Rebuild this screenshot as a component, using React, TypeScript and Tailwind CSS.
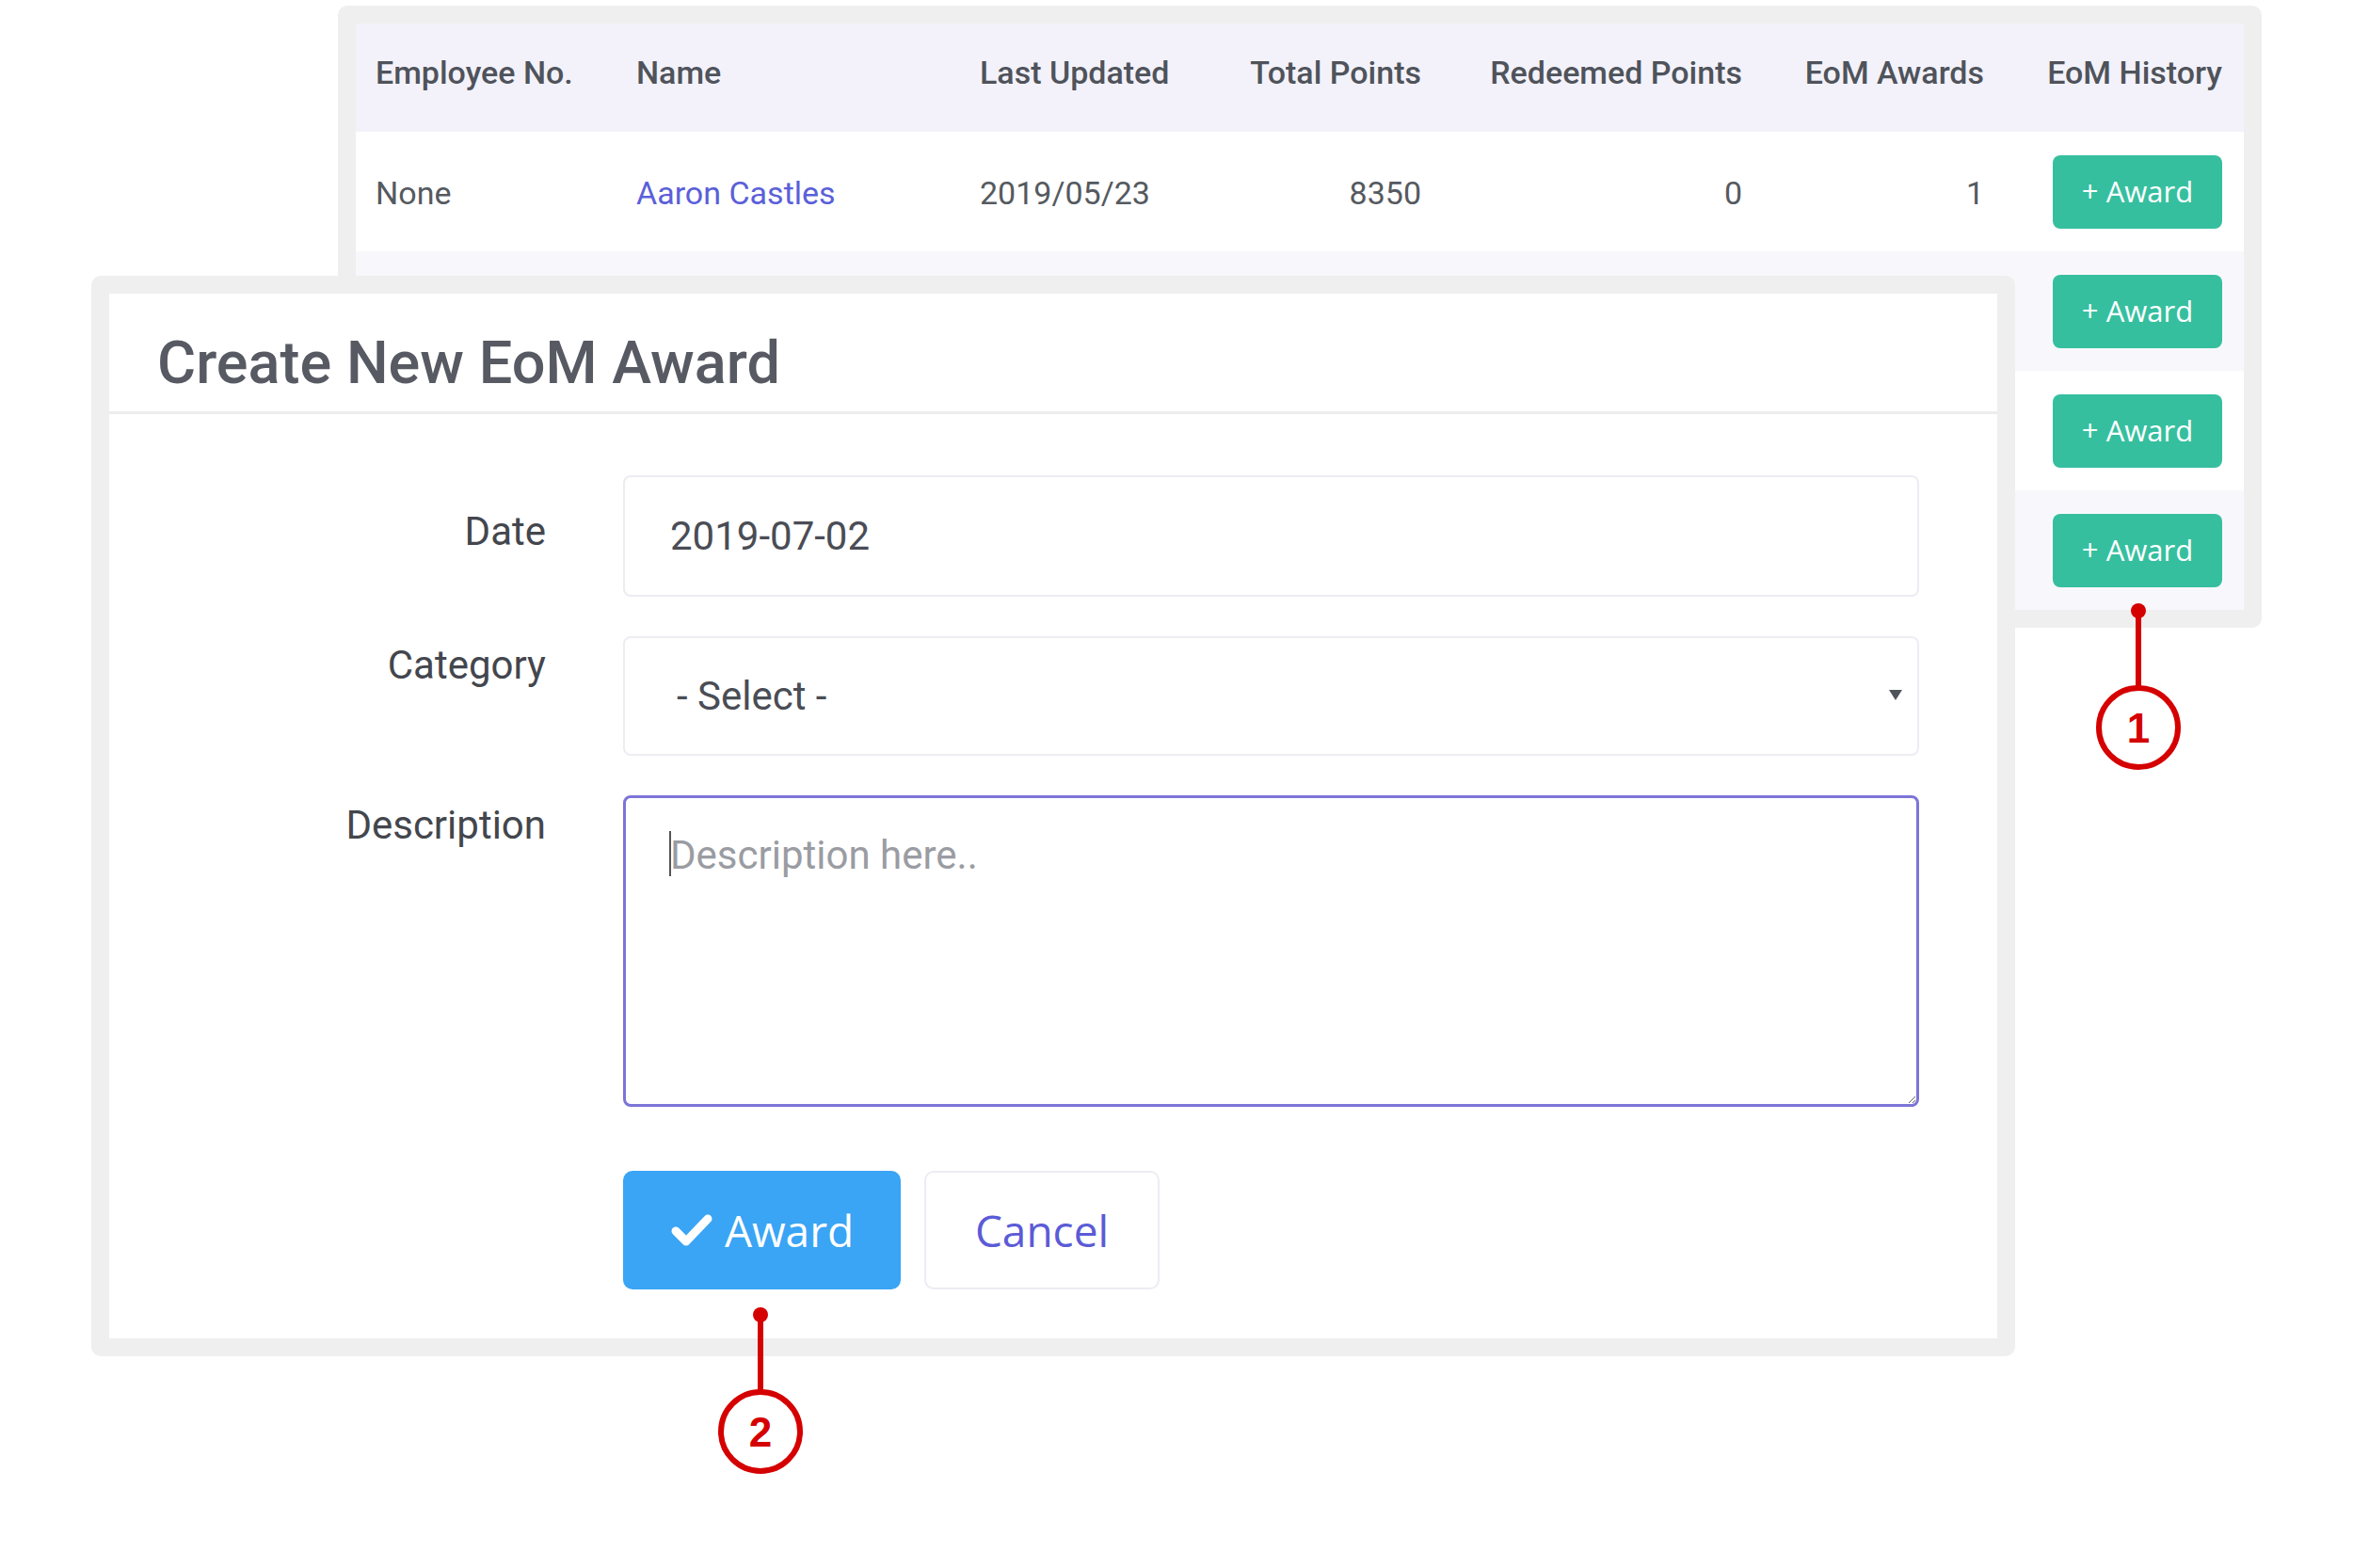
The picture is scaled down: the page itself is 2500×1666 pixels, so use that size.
import React from 'react'

const employees = [
    { no: 'None', name: 'Aaron Castles', updated: '2019/05/23', total: '8350', redeemed: '0', awards: '1' },
    { no: '', name: '', updated: '', total: '', redeemed: '', awards: '' },
    { no: '', name: '', updated: '', total: '', redeemed: '', awards: '' },
    { no: '', name: '', updated: '', total: '', redeemed: '', awards: '' },
]

const cols = 'grid grid-cols-[298px_365px_249px_220px_341px_257px_276px]'

function AwardButton() {
    return (
        <button className="w-[180px] h-[78px] rounded-[8px] bg-[#36bf9f] text-white font-['Open_Sans',sans-serif] text-[31px]">
            + Award
        </button>
    )
}

function EmployeeTable() {
    return (
        <div className="ml-[359px] mt-[6px] w-[2044px] bg-[#efefef] p-[19px] rounded-[10px]">
            <div className="bg-white text-[34px] text-[#555a60] whitespace-nowrap">
                <div className={`${cols} h-[115px] items-center bg-[#f3f2fa] font-medium text-[#4f535b] pb-[10px]`}>
                    <div className="pl-[21px]">Employee No.</div>
                    <div>Name</div>
                    <div>Last Updated</div>
                    <div className="text-right">Total Points</div>
                    <div className="text-right">Redeemed Points</div>
                    <div className="text-right">EoM Awards</div>
                    <div className="text-right pr-[23px]">EoM History</div>
                </div>
                {employees.map((e, i) => (
                    <div
                        key={i}
                        className={`${cols} h-[127px] items-center ${i % 2 === 1 ? 'bg-[#f8f8fc]' : 'bg-white'}`}
                    >
                        <div className="pl-[21px] pt-[4px]">{e.no}</div>
                        <div className="text-[#5b5fd9] pt-[4px]">{e.name}</div>
                        <div className="pt-[4px]">{e.updated}</div>
                        <div className="text-right pt-[4px]">{e.total}</div>
                        <div className="text-right pt-[4px]">{e.redeemed}</div>
                        <div className="text-right pt-[4px]">{e.awards}</div>
                        <div className="flex justify-end pr-[23px]">
                            <AwardButton />
                        </div>
                    </div>
                ))}
            </div>
        </div>
    )
}

function AwardModal() {
    return (
        <div className="absolute left-[97px] top-[293px] w-[2044px] h-[1148px] bg-[#efefef] p-[19px] rounded-[10px]">
            <div className="h-full bg-white">
                {/* Header */}
                <div className="h-[128px] border-b-[3px] border-[#ededed] pl-[51px] pt-[43px]">
                    <h2 className="text-[63px] leading-[62px] font-medium text-[#575a62]">Create New EoM Award</h2>
                </div>

                {/* Form */}
                <div className="pt-[65px] flex flex-col gap-[42px] text-[42px] leading-[42px]">
                    <div className="grid grid-cols-[464px_1377px] gap-x-[82px] items-start">
                        <label className="text-right text-[#43464d] mt-[39px]">Date</label>
                        <input
                            type="text"
                            readOnly
                            value="2019-07-02"
                            className="h-[129px] w-full rounded-[8px] border-2 border-[#ececf3] pl-[48px] text-[#4a4d55] outline-none"
                        />
                    </div>
                    <div className="grid grid-cols-[464px_1377px] gap-x-[82px] items-start">
                        <label className="text-right text-[#43464d] mt-[10px]">Category</label>
                        <div className="relative">
                            <select className="h-[127px] w-full appearance-none rounded-[8px] border-2 border-[#ececf3] bg-white pl-[55px] text-[#4a4d55] outline-none">
                                <option>- Select -</option>
                            </select>
                            <svg className="absolute right-[18px] top-[57px]" width="14" height="11" viewBox="0 0 14 11">
                                <path d="M0 0 H14 L7 11 Z" fill="#50535a" />
                            </svg>
                        </div>
                    </div>
                    <div className="grid grid-cols-[464px_1377px] gap-x-[82px] items-start">
                        <label className="text-right text-[#43464d] mt-[11px]">Description</label>
                        <div className="relative">
                            <textarea
                                placeholder="Description here.."
                                className="block h-[331px] w-full rounded-[8px] border-[3px] border-[#7d74d8] pl-[47px] pt-[40px] text-[#4a4d55] placeholder:text-[#9a9ca2] outline-none"
                            />
                            <span className="absolute left-[49px] top-[38px] h-[48px] w-[2px] bg-[#555]" />
                        </div>
                    </div>

                    {/* Actions */}
                    <div className="grid grid-cols-[464px_1377px] gap-x-[82px] mt-[26px]">
                        <div />
                        <div className="flex gap-[25px] font-['Open_Sans',sans-serif] text-[46px]">
                            <button className="flex h-[126px] w-[295px] items-center justify-center gap-[12px] rounded-[10px] bg-[#3aa4f5] text-white">
                                <svg width="46" height="36" viewBox="0 0 46 36">
                                    <path
                                        d="M6 19 L17 30 L40 6"
                                        fill="none"
                                        stroke="white"
                                        strokeWidth="9"
                                        strokeLinecap="round"
                                        strokeLinejoin="round"
                                    />
                                </svg>
                                Award
                            </button>
                            <button className="h-[126px] w-[250px] rounded-[10px] border-2 border-[#ececf3] bg-white text-[#5b5bd6]">
                                Cancel
                            </button>
                        </div>
                    </div>
                </div>
            </div>
        </div>
    )
}

function Callouts() {
    const red = '#d50000'
    return (
        <svg className="absolute inset-0 pointer-events-none" width="2500" height="1666" viewBox="0 0 2500 1666">
            <circle cx="2272" cy="649" r="8" fill={red} />
            <line x1="2272" y1="649" x2="2272" y2="730" stroke={red} strokeWidth="6" />
            <circle cx="2272" cy="773" r="42" fill="white" stroke={red} strokeWidth="6" />
            <text x="2272" y="789" textAnchor="middle" fill={red} fontSize="44" fontWeight="700" fontFamily="Liberation Sans, Arial, sans-serif">1</text>

            <circle cx="808" cy="1397" r="8" fill={red} />
            <line x1="808" y1="1397" x2="808" y2="1478" stroke={red} strokeWidth="6" />
            <circle cx="808" cy="1521" r="42" fill="white" stroke={red} strokeWidth="6" />
            <text x="808" y="1537" textAnchor="middle" fill={red} fontSize="44" fontWeight="700" fontFamily="Liberation Sans, Arial, sans-serif">2</text>
        </svg>
    )
}

export default function App() {
    return (
        <div className="relative w-[2500px] h-[1666px] overflow-hidden bg-white font-['Roboto',sans-serif]">
            <EmployeeTable />
            <AwardModal />
            <Callouts />
        </div>
    )
}
